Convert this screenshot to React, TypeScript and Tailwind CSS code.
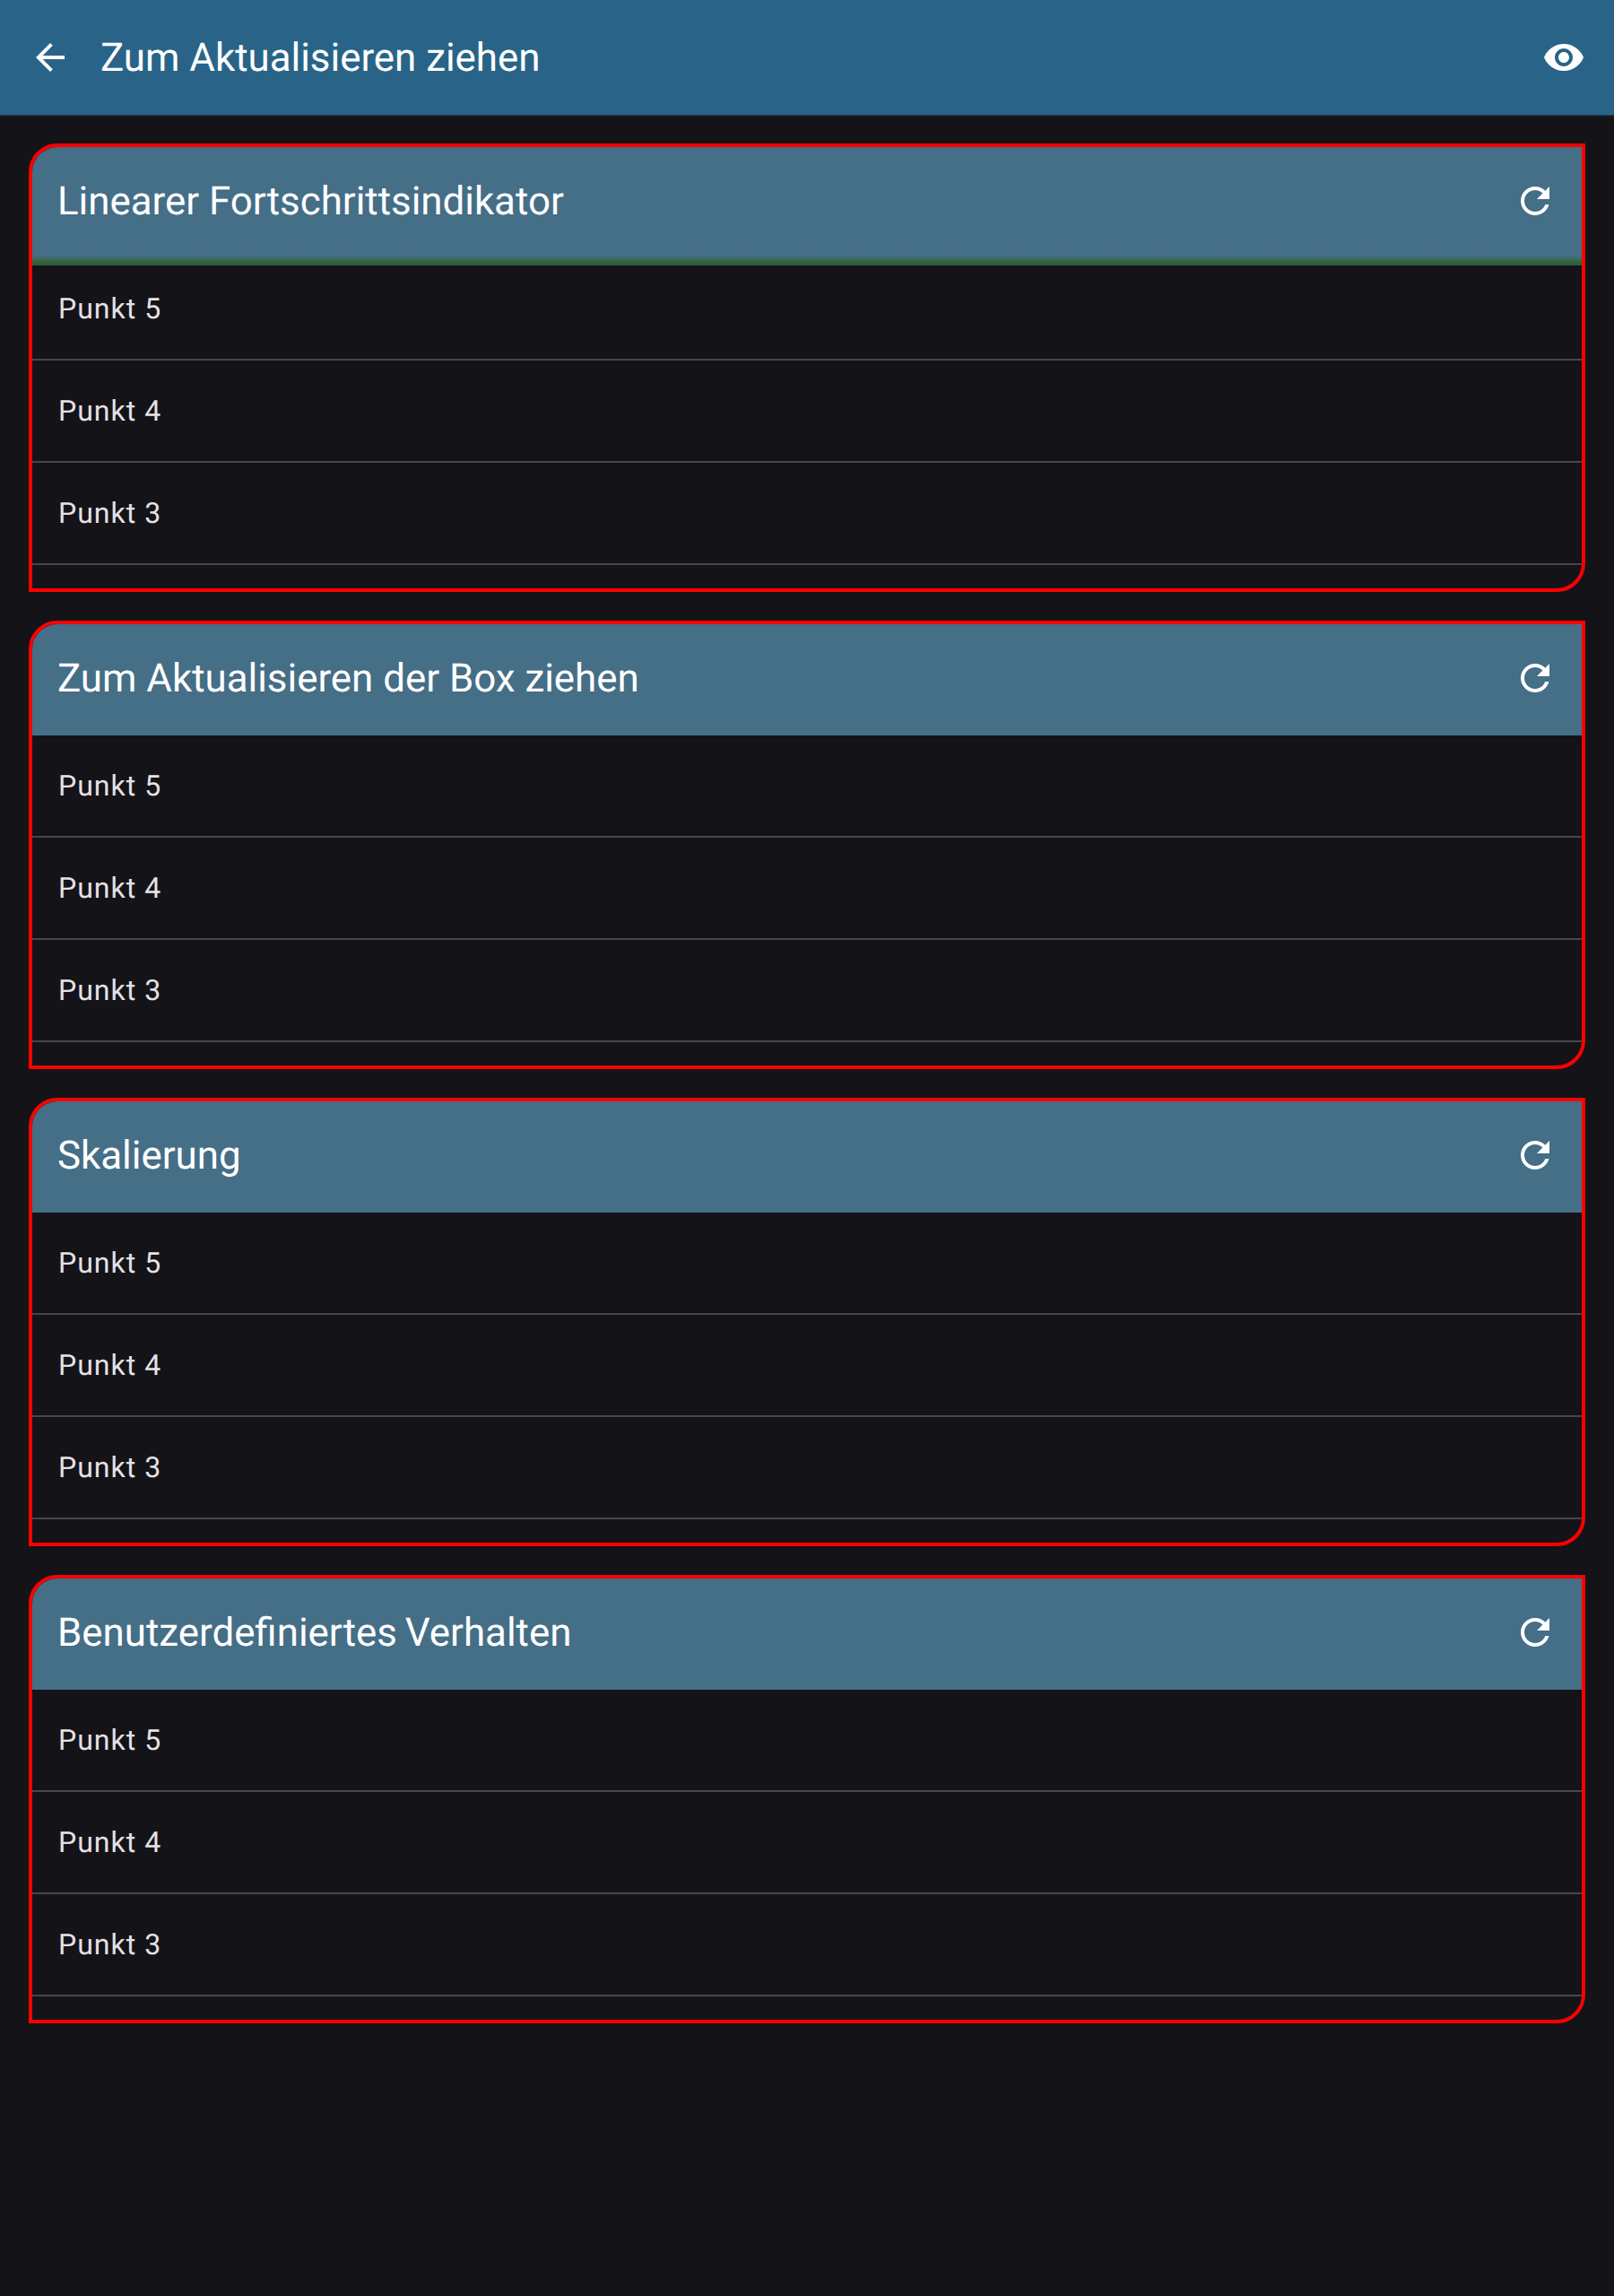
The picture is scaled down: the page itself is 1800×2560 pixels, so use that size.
import React from 'react';

type Section = { title: string; loading?: boolean; tight?: boolean };

const sections: Section[] = [
  { title: 'Linearer Fortschrittsindikator', loading: true },
  { title: 'Zum Aktualisieren der Box ziehen' },
  { title: 'Skalierung' },
  { title: 'Benutzerdefiniertes Verhalten', tight: true },
];

const items = ['Punkt 5', 'Punkt 4', 'Punkt 3'];

function Icon({ path }: { path: string }) {
  return (
    <svg viewBox="0 0 24 24" className="size-12 shrink-0" fill="currentColor" aria-hidden="true">
      <path d={path} />
    </svg>
  );
}

const arrowBack = 'M20 11H7.83l5.59-5.59L12 4l-8 8 8 8 1.41-1.41L7.83 13H20v-2z';
const visibility =
  'M12 4.5C7 4.5 2.73 7.61 1 12c1.73 4.39 6 7.5 11 7.5s9.27-3.11 11-7.5c-1.73-4.39-6-7.5-11-7.5zM12 17c-2.76 0-5-2.24-5-5s2.24-5 5-5 5 2.24 5 5-2.24 5-5 5zm0-8c-1.66 0-3 1.34-3 3s1.34 3 3 3 3-1.34 3-3-1.34-3-3-3z';
const refresh =
  'M17.65 6.35C16.2 4.9 14.21 4 12 4c-4.42 0-7.99 3.58-7.99 8s3.57 8 7.99 8c3.73 0 6.84-2.55 7.73-6h-2.08c-.82 2.33-3.04 4-5.65 4-3.31 0-6-2.69-6-6s2.69-6 6-6c1.66 0 3.14.69 4.22 1.78L13 11h7V4l-2.35 2.35z';

function Card({ title, loading, tight }: Section) {
  return (
    <section className="h-[500px] overflow-hidden rounded-tl-[32px] rounded-br-[32px] border-4 border-[#ff0000]">
      <div className="relative flex h-[124px] items-center justify-between bg-[#456e87] pr-7 pb-1 pl-7 text-white">
        <h2 className={tight ? 'text-[43.85px] leading-[56px] [word-spacing:-2px]' : 'text-[43.85px] leading-[56px]'}>
          {title}
        </h2>
        <button aria-label="Aktualisieren">
          <Icon path={refresh} />
        </button>
        {loading && (
          <div className="absolute inset-x-0 top-[121px] h-[11px] bg-linear-to-b from-[#456e87] via-[#37674a] via-50% to-[#2f5a30]" />
        )}
      </div>
      <ul>
        {items.map((item) => (
          <li
            key={item}
            className="flex h-[114px] items-center border-b-2 border-[#47464b] pl-[29px] text-[32px] leading-[48px] tracking-[1px] text-[#e5e1e6]"
          >
            {item}
          </li>
        ))}
      </ul>
    </section>
  );
}

export default function App() {
  return (
    <div className="h-[2560px] w-[1800px] overflow-hidden bg-[#141318] font-['Roboto',sans-serif] [text-rendering:geometricPrecision]">
      <header className="flex h-32 items-center bg-[#296488] px-8 text-white shadow-[0_1px_2px_#1d4259]">
        <button aria-label="Zurück">
          <Icon path={arrowBack} />
        </button>
        <h1 className="ml-8 flex-1 text-[43.85px] leading-[56px]">Zum Aktualisieren ziehen</h1>
        <button aria-label="Anzeigen">
          <Icon path={visibility} />
        </button>
      </header>
      <main className="flex flex-col gap-8 p-8">
        {sections.map((s) => (
          <Card key={s.title} {...s} />
        ))}
      </main>
    </div>
  );
}
